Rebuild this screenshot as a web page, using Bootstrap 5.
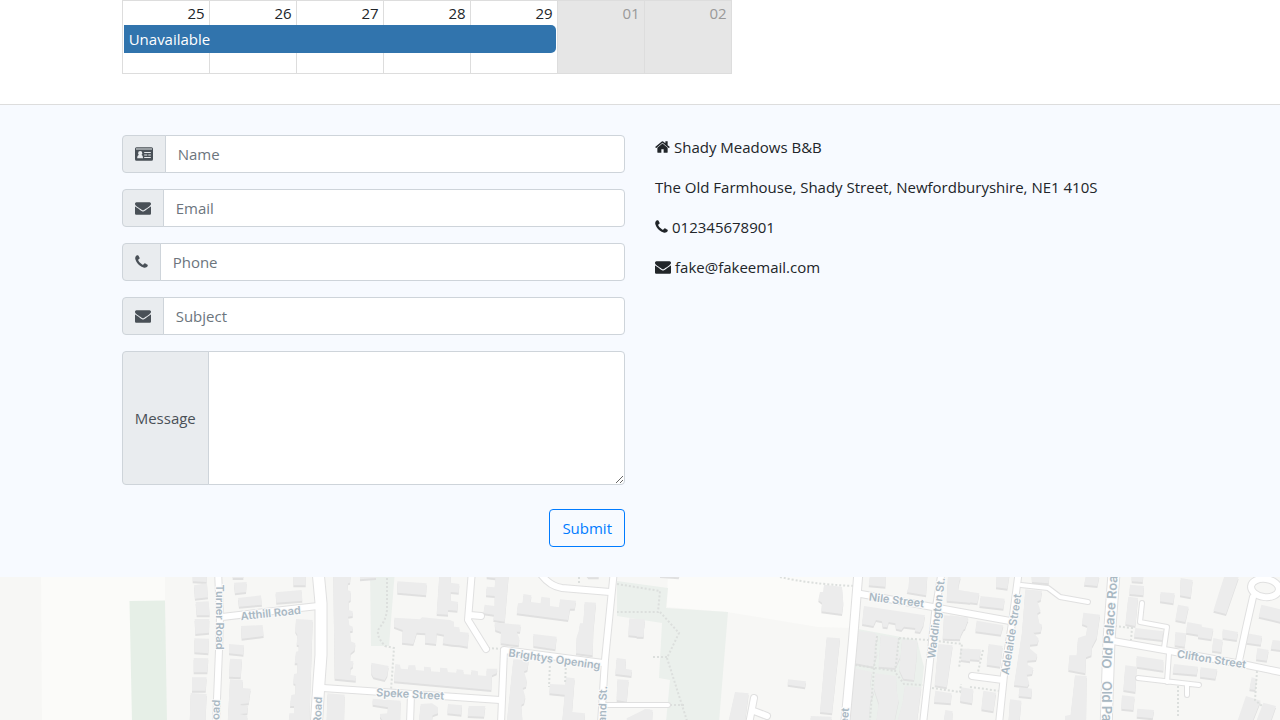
<!DOCTYPE html>
<html lang="en">
<head>
<meta charset="utf-8">
<meta name="viewport" content="width=device-width, initial-scale=1">
<title>Shady Meadows B&amp;B</title>
<link href="https://cdn.jsdelivr.net/npm/bootstrap@5.3.0/dist/css/bootstrap.min.css" rel="stylesheet">
<style>
body { font-family: "Open Sans", "Noto Sans", sans-serif; font-size: 15px; line-height: 24px; color: #212529; }
.gutter { padding-left: 15px; padding-right: 15px; }
.calendar { margin-bottom: 30px; }
.calendar table { table-layout: fixed; border-collapse: collapse; width: 100%; margin: 0; }
.calendar td { border: 1px solid #ddd; height: 73px; padding: 0 4px; text-align: right; vertical-align: top; }
.calendar .off-range { background: #e6e6e6; color: #999; }
.event { top: 25px; left: 2px; width: calc(500% / 7 - 3px); height: 28px; padding: 2px 5px; background: #3174ad; color: #fff; border-radius: 0 5px 5px 0; }
.contact { background: #f7faff; border-top: 1px solid #ddd; padding: 30px 0; }
.input-group-text { font-size: 15px; line-height: 24px; background: #e9ecef; border-color: #ced4da; color: #495057; border-radius: 4px; }
.form-control { font-size: 15px; line-height: 24px; border-color: #ced4da; border-radius: 4px; color: #495057; }
.form-control::placeholder { color: #6c757d; }
.contact textarea.form-control { resize: vertical; }
.btn-send { font-size: 15px; line-height: 24px; color: #007bff; border-color: #007bff; border-radius: 4px; background: transparent; }
.btn-send:hover { color: #fff; background: #007bff; }
.icon { height: 16px; fill: currentColor; flex: none; }
.details p { margin-bottom: 16px; display: flex; align-items: center; gap: 4px; }
.map { background: #f7f7f5; line-height: 0; overflow: hidden; }
.map svg { width: 100%; height: 143px; }
.w4 { stroke-width: calc(4px + var(--edge)); }
.w6 { stroke-width: calc(6px + var(--edge)); }
.w8 { stroke-width: calc(8px + var(--edge)); }
.w11 { stroke-width: calc(11px + var(--edge)); }
.casing { --edge: 2px; stroke: #e0e0e0; }
.surface { --edge: 0px; stroke: #fff; }
.paths path { fill: none; stroke: #dcdfdd; stroke-width: 2px; stroke-dasharray: 2 2; }
.labels text { font: 600 11px Inter, "Open Sans", sans-serif; fill: #a9b8c3; stroke: #fafafa; stroke-width: 2px; paint-order: stroke; text-anchor: middle; }
.labels .major { font-size: 13px; }
.labels .from-start { text-anchor: start; }
.labels .to-end { text-anchor: end; }
</style>
</head>
<body>
<svg class="d-none" aria-hidden="true">
  <symbol id="envelope" viewBox="0 0 1792 1792"><path d="M1792 710v794q0 66-47 113t-113 47h-1472q-66 0-113-47t-47-113v-794q44 49 101 87 362 246 497 345 57 42 92.500 65.500t94.500 48 110 24.500h2q51 0 110-24.500t94.500-48 92.500-65.500q170-123 498-345 57-39 100-87zm0-294q0 79-49 151t-122 123q-376 261-468 325-10 7-42.500 31t-54 38.800-52 32.500-57.500 27-50 9h-2q-23 0-50-9t-57.500-27-52-32.500-54-38.800-42.500-31q-91-64-262-182.500t-205-142.500q-62-42-117-115.500t-55-136.500q0-78 41.500-130t118.500-52h1472q65 0 112.500 47t47.500 113z"/></symbol>
  <symbol id="phone-glyph" viewBox="192 0 1408 1792"><path d="M1600 1240q0 27-10 70.500t-21 68.500q-21 50-122 106-94 51-186 51-27 0-53-3.500t-57.500-12.500-47-14.500-55.500-20.500-49-18q-98-35-175-83-127-79-264-216t-216-264q-48-77-83-175-3-9-18-49t-20.500-55.500-14.500-47-12.500-57.500-3.500-53q0-92 51-186 56-101 106-122 25-11 68.500-21t70.500-10q14 0 21 3 18 6 53 76 11 19 30 54t35 63.500 31 53.500q3 4 17.500 25t21.500 35.500 7 28.500q0 20-28.500 50t-62 55-62 53-28.500 46q0 9 5 22.500t8.500 20.500 14 24 11.500 19q76 137 174 235t235 174q2 1 19 11.500t24 14 20.500 8.500 22.500 5q18 0 46-28.500t53-62 55-62 50-28.500q14 0 28.500 7t35.500 21.500 25 17.500q25 15 53.500 31t63.500 35 54 30q70 35 76 53 3 7 3 21z"/></symbol>
  <symbol id="home" viewBox="90 0 1612 1792"><path d="M1472 992v480q0 26-19 45t-45 19h-384v-384h-256v384h-384q-26 0-45-19t-19-45v-480q0-1 .5-3t.5-3l575-474 575 474q1 2 1 6zm223-69l-62 74q-8 9-21 11h-3q-13 0-21-7l-692-577-692 577q-12 8-24 7-13-2-21-11l-62-74q-8-10-7-23.500t11-21.500l719-599q32-26 76-26t76 26l244 204v-195q0-14 9-23t23-9h192q14 0 23 9t9 23v408l219 182q10 8 11 21.500t-7 23.500z"/></symbol>
  <symbol id="id-card" viewBox="0 0 18 16"><path fill-rule="evenodd" d="M1.500 1.300h15A1.500 1.500 0 0 1 18 2.800v10.400a1.500 1.500 0 0 1-1.500 1.500h-15A1.500 1.500 0 0 1 0 13.200V2.800a1.500 1.500 0 0 1 1.500-1.500zM1 2.500v1h16v-1zM2.200 12.200h5.800c0-2-.5-3.300-1.600-3.300.7-.5.9-1 .9-1.700a2.100 2.100 0 0 0-4.200 0c0 .7.300 1.300.9 1.700-1.200 0-1.800 1.300-1.800 3.300zM9.200 6v1.100h6.600V6zm0 2.500v1.100h3.100V8.500zm4.100 0v1.100h2.500V8.500zM9.200 11v1.100h6.600V11z"/></symbol>
</svg>

<main class="row g-0">
  <div class="col-6 offset-1 gutter">
    <div class="calendar position-relative">
      <table aria-label="Availability">
        <tbody><tr><td>25</td><td>26</td><td>27</td><td>28</td><td>29</td><td class="off-range">01</td><td class="off-range">02</td></tr></tbody>
      </table>
      <div class="event position-absolute">Unavailable</div>
    </div>
  </div>
</main>

<section class="contact">
  <div class="row g-0 justify-content-center">
    <div class="col-10">
      <div class="row g-0">
        <div class="col-6 gutter">
          <form>
            <div class="input-group mb-3">
              <label class="input-group-text" for="name" aria-label="Name"><svg class="icon" width="18"><use href="#id-card"/></svg></label>
              <input type="text" class="form-control" id="name" placeholder="Name">
            </div>
            <div class="input-group mb-3">
              <label class="input-group-text" for="email" aria-label="Email"><svg class="icon" width="16"><use href="#envelope"/></svg></label>
              <input type="email" class="form-control" id="email" placeholder="Email">
            </div>
            <div class="input-group mb-3">
              <label class="input-group-text" for="phone" aria-label="Phone"><svg class="icon" width="13"><use href="#phone-glyph"/></svg></label>
              <input type="tel" class="form-control" id="phone" placeholder="Phone">
            </div>
            <div class="input-group mb-3">
              <label class="input-group-text" for="subject" aria-label="Subject"><svg class="icon" width="16"><use href="#envelope"/></svg></label>
              <input type="text" class="form-control" id="subject" placeholder="Subject">
            </div>
            <div class="input-group mb-4">
              <label class="input-group-text" for="message">Message</label>
              <textarea class="form-control" id="message" rows="5"></textarea>
            </div>
            <div class="d-flex justify-content-end"><button type="button" class="btn btn-send">Submit</button></div>
          </form>
        </div>
        <div class="col-6 gutter details">
          <p><svg class="icon" width="15"><use href="#home"/></svg>Shady Meadows B&amp;B</p>
          <p>The Old Farmhouse, Shady Street, Newfordburyshire, NE1 410S</p>
          <p><svg class="icon" width="13"><use href="#phone-glyph"/></svg>012345678901</p>
          <p><svg class="icon" width="16"><use href="#envelope"/></svg>fake@fakeemail.com</p>
        </div>
      </div>
    </div>
  </div>
</section>

<div class="map">
<svg viewBox="0 577 1280 143" preserveAspectRatio="xMidYMin slice" role="img" aria-label="Map">
  <g fill="#fbfbf9">
    <path d="M41 570H165V722H42z"/><path d="M668 570H858L854 628 818 627 727 612 667 607z"/>
  </g>
  <path fill="#e6efe7" d="M129.500 601 165 600.500 167 722H132z"/>
  <g fill="#ebf0ec">
    <path d="M370 570H395L389 646H371z"/>
    <path d="M617 581 668 588 666 608 728 612 719 722H666L670 680 659 678 662 623 617 616z"/>
    <path d="M858 629 917 640 924 667 922 684 915 722H850z"/>
  </g>
  <defs>
    <g id="buildings">
      <g transform="translate(0 570) scale(.33333)">
        <path d="M578 15H620V36L578 34zM582 46 621 40 624 82 585 86zM587 96 626 94 629 136H590zM584 147H628L627 188 586 192zM583 205 627 206 625 250 583 247zM581 264 625 265 622 307H581zM576 322H620L617 362H576zM572 369 620 372 616 460H569zM698 15H730V24H698zM702 38 740 36 738 66 705 70zM714 84 783 76 786 104 717 110zM827 67 905 60 907 92 829 98zM880 15H917V46H880z"/>
        <path d="M888 147 938 150 928 460H866L868 430H882V408H870L874 375 886 373V342L880 340 882 312 892 310V280H884L888 245 896 243V226L890 224 892 194 886 184zM723 168 788 165 791 198 725 206zM687 222 732 226 730 254 687 250zM690 266 726 268 722 322 687 320zM690 328 728 330V354L752 356 750 370 746 400 722 402V406L744 408 742 430 720 432 742 438V460H683z"/>
      </g>
      <g transform="translate(320 570) scale(.33333)">
        <path d="M40 15H92L90 38 84 40 82 60 92 64V90L86 94V120L98 124V138L84 140 88 166 98 170V182L90 184 92 214 106 220 104 240 92 250 90 272 100 274 98 290 92 294 90 314 108 318 107 332 44 326zM120 15H168V24L120 28zM232 34 320 40 318 76 232 68zM358 15H392V38L418 42 416 68 392 66V92L414 96 412 122 384 120V134L350 132zM500 15H566L554 155 520 150 522 134 490 130 494 104 524 108V78L498 76 500 50 524 52 526 25 500 22z"/>
        <path d="M223 143 300 148 306 142 390 150 402 155V170L418 172V185L446 188 443 230 418 226 395 224 368 220 372 194 350 190 348 222 315 218 316 190 290 188 280 222 246 218 248 180 222 170zM524 158 602 164 600 185 590 185 598 205 596 226 542 220 543 186 526 180zM610 72 634 76 632 96 662 100 664 80 690 84V108L718 112 720 88 768 92 764 116 750 116 744 150 590 130 594 100 608 98zM794 96 828 98 820 184 818 256 768 250 770 200 776 184 780 160H790zM640 192 710 200 706 238 640 228zM226 282 240 284 242 296 265 298V286H286V300L312 302V290L332 292V304L360 306V293L382 295V306L410 308V298L430 300V312L454 314V300L474 304V316L500 318V296L532 296 530 310 516 316 514 360 222 334zM154 278 206 288 202 316 194 330 160 322 154 310z"/>
        <path d="M928 145 974 150 970 200 925 196zM890 264 918 268 916 296 936 300 934 318 886 312zM892 328 926 330 920 395 890 390zM22 370 74 374 72 460H20zM158 386 242 392 240 460H194L180 440V432L202 430 204 412 158 404zM302 402 336 400 354 412V430L338 436 334 460H296zM384 402 426 406 424 434 382 430zM446 408H496L492 440 443 438zM580 268 626 270 622 300 612 304 620 330 618 350 608 354 616 380 612 400 604 404 608 460H560zM738 322 764 325 756 426 795 430 793 460H726L734 374 688 370 690 342 736 344zM920 445 975 418H990V460H920zM800 15H836V22H805z"/>
      </g>
      <g transform="translate(640 570) scale(.33333)">
        <path d="M60 15H118L116 22 60 18zM552 44 606 50 610 100 606 132 544 124 546 98 535 90 540 66H550zM560 202 600 205 576 430 540 426zM444 328 498 334 495 352 443 344zM285 366 326 370 314 460H264zM512 438 575 440 572 460H512zM-10 148H14L10 200H-10zM14 418 38 420 36 460H12zM690 15H738L736 50 686 46zM808 15H862L858 76 800 66 806 50z"/>
        <path d="M672 108 855 136 850 166 840 186 824 184 826 174 792 170 784 180 768 176 766 160 746 156 742 172 728 170 726 154 708 150 700 168 666 162z"/>
        <path d="M650 182 704 188 714 200 704 228 712 250 700 290 646 280zM722 195 776 205 772 230 780 262 766 294 716 290zM786 208 832 212 830 260 822 330 790 326 778 300zM640 294 696 306 690 350 702 366 690 400 686 460H628zM706 310 768 318 770 360 776 392 762 460H708L716 400 702 356zM794 348 844 352 830 460H770L788 396z"/>
        <path d="M924 15H955V60L990 66V98L920 92zM912 136 985 142 975 176 962 180 960 208 908 206zM895 222 938 226 920 352 884 346zM965 236H990V274L962 270zM886 362 935 370 932 400 882 396zM965 355 990 358V395L960 392zM916 420 938 424 936 460H910z"/>
      </g>
      <g transform="translate(950 570) scale(.33333)">
        <path d="M0 15 32 20 22 60 88 70 82 100 0 90zM92 78 164 86 160 116 88 108zM140 15H178L172 56 138 52zM0 136 20 138 55 150 40 180 30 200H0zM80 152 160 166 152 194 76 184zM30 236 92 238 88 270 34 266zM116 222 158 228 150 290 110 284zM34 352 70 358 66 400 32 394zM100 362 138 368 130 424 94 418z"/>
        <path d="M245 15H298L296 40 246 36zM408 15 448 18 442 48 402 44zM226 58 276 62 272 90 262 94 272 124 262 130 268 160 276 164 272 186 250 188 266 206 262 222 240 224V236L262 254 258 270 232 272V284L250 294 246 312 230 314 238 340 232 350 192 345 216 186zM208 352 246 356 244 382 206 378zM180 388 214 392 208 460H175zM400 128 450 134 440 204 426 230 424 256 408 262 406 310 355 300 358 256 380 256 384 204 408 196 412 168 396 162zM375 316 410 318 408 460H345V438L362 434z"/>
        <path d="M545 15H580L578 36 545 34zM540 44 582 48 580 76 538 72zM535 80 564 84 556 168 526 162zM556 174 640 184 636 210 552 200zM560 258 640 270V302L560 290zM526 286 560 290 556 366 520 360zM516 376 554 380 550 420 514 416zM562 416 612 420 608 445 560 440zM692 24 728 30 722 82 690 76zM632 66 674 70 670 100 630 94zM684 104 716 110 706 156 676 150zM712 156 756 164 754 170 790 176 784 208 744 202V194L708 188zM676 186 708 190 704 230 674 226zM818 178 864 186 860 210 818 204zM790 204 818 210 814 246 786 242zM672 282 744 290 740 314 668 308zM752 292 802 298 796 326 750 320zM824 15 866 22 828 132 790 122zM934 104 990 118V155L926 140zM892 190 936 198 932 224 888 218zM922 234 956 240 950 272 918 268zM968 210 990 212V240L962 236zM905 322 920 326 916 360 898 358zM888 378 932 392 905 460H860zM940 398 978 408 960 460 920 450z"/>
      </g>
    </g>
    <g id="road-lines" fill="none" stroke-linecap="round" stroke-linejoin="round">
      <path class="w6" d="M218 570 220 617 219 650 216 724"/><path class="w6" d="M222 617 318 606"/>
      <path class="w11" d="M317 560 321 603 321 655 319 682 316 730"/><path class="w6" d="M323 688 500 700M411 694 410 724"/>
      <path class="w6" d="M504 650 501 724M504 650 603 663M472 570 468 620 486 649M470 615 481 616M538 570Q548 586 562 588L610 592"/>
      <path class="w6" d="M614 570 605 660 601 724"/><path class="w4" d="M605 705H668"/>
      <path class="w8" d="M859 565 853 640 845 726"/><path class="w6" d="M861 594 1010 621M942 570 935 613 929 670 923 724M1019 570 1012 623 1004 675 999 724M972 676 1003 680"/>
      <path class="w4" d="M1021 585 1048 588 1060 597 1088 602"/>
      <path class="w11" d="M1115 560 1109 640 1106 730"/><path class="w6" d="M1113 641 1170 651 1247 665 1290 674M1253 597 1246 628 1239 661M754 698 749 724M754 711 767 716"/>
      <ellipse class="w6" cx="1265" cy="588" rx="14" ry="9" transform="rotate(8 1265 588)"/>
      <path class="w4" d="M1142 603 1140 622 1167 627 1164 648M1169 653 1167 682M1138 678 1199 685M1187 685V695"/>
    </g>
  </defs>
  <use href="#buildings" y="2" fill="#e0e0e0"/>
  <use href="#buildings" fill="#ececec"/>
  <g class="paths">
    <path d="M387 578V610Q386 620 380 627T385 646L394 648 391 690M488 648 502 649M550 662 549 687M566 664 565 684M579 577V584M617 584 660 591 658 612H617M660 612 679 633 667 658 688 724M653 657H667M670 705H684M780 577Q810 584 854 586M877 636 874 668 870 720M899 638 895 672 904 684 923 685M855 665 895 671M899 638 928 640 962 644 959 668M932 688 960 692 961 684M983 650 978 672M970 687 1000 691M1115 626 1132 628 1131 640M1178 686V718M1257 671 1255 700 1262 706"/>
  </g>
  <use class="casing" href="#road-lines"/>
  <use class="surface" href="#road-lines"/>
  <g class="labels">
    <text transform="translate(216 617) rotate(90)">Turner Road</text>
    <text transform="translate(271 617) rotate(-6)">Atthill Road</text>
    <text class="to-end" transform="translate(220 700) rotate(-88)">Road</text>
    <text class="to-end" transform="translate(322 697) rotate(-88)">Road</text>
    <text transform="translate(410 698) rotate(3)">Speke Street</text>
    <text transform="translate(554 663) rotate(8)">Brightys Opening</text>
    <text class="to-end" transform="translate(607 686) rotate(-88)">Grand St.</text>
    <text class="to-end" transform="translate(849 708) rotate(-86)">Street</text>
    <text transform="translate(896 604) rotate(7)">Nile Street</text>
    <text class="from-start" transform="translate(935 659) rotate(-83)">Waddington St.</text>
    <text transform="translate(1015 635) rotate(-81)">Adelaide Street</text>
    <text class="major from-start" transform="translate(1111 669) rotate(-86)">Old Palace Road</text>
    <text class="major from-start" transform="translate(1102 681) rotate(90)">Old Palace Road</text>
    <text transform="translate(1211 663) rotate(9)">Clifton Street</text>
  </g>
</svg>
</div>
<script src="https://cdn.jsdelivr.net/npm/bootstrap@5.3.0/dist/js/bootstrap.bundle.min.js"></script>
</body>
</html>
